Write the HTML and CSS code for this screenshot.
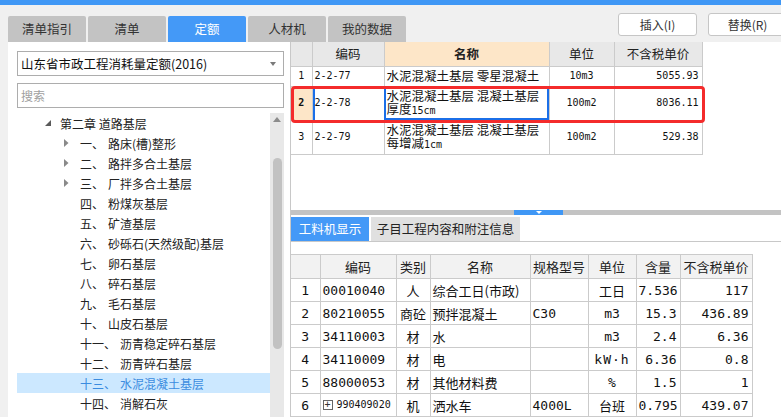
FILE: index.html
```html
<!DOCTYPE html>
<html lang="zh-CN">
<head>
<meta charset="utf-8">
<title>定额</title>
<link rel="stylesheet" href="styles.css">
</head>
<body>
<div class="topbar"></div>
<div class="toolbar">
  <div class="tabs">
    <div class="tab">清单指引</div>
    <div class="tab">清单</div>
    <div class="tab active">定额</div>
    <div class="tab">人材机</div>
    <div class="tab">我的数据</div>
  </div>
  <div class="actions">
    <button class="btn">插入(I)</button>
    <button class="btn">替换(R)</button>
  </div>
</div>
<div class="main">
  <aside class="left">
    <div class="select">山东省市政工程消耗量定额(2016)<span class="caret"></span></div>
    <div class="search">搜索</div>
    <div class="treewrap">
      <ul class="tree">
        <li class="ch"><span class="arrow"><svg width="6" height="6" viewBox="0 0 6 6"><polygon points="6,0 6,6 0,6" fill="#5a5a5a"/></svg></span>第二章 道路基层</li>
        <li class="sub"><span class="arrow"><svg width="5" height="8" viewBox="0 0 5 8"><polygon points="0,0 4.5,4 0,8" fill="#8a8a8a"/></svg></span><span class="no">一、</span>路床(槽)整形</li>
        <li class="sub"><span class="arrow"><svg width="5" height="8" viewBox="0 0 5 8"><polygon points="0,0 4.5,4 0,8" fill="#8a8a8a"/></svg></span><span class="no">二、</span>路拌多合土基层</li>
        <li class="sub"><span class="arrow"><svg width="5" height="8" viewBox="0 0 5 8"><polygon points="0,0 4.5,4 0,8" fill="#8a8a8a"/></svg></span><span class="no">三、</span>厂拌多合土基层</li>
        <li class="sub"><span class="arrow"></span><span class="no">四、</span>粉煤灰基层</li>
        <li class="sub"><span class="arrow"></span><span class="no">五、</span>矿渣基层</li>
        <li class="sub"><span class="arrow"></span><span class="no">六、</span>砂砾石(天然级配)基层</li>
        <li class="sub"><span class="arrow"></span><span class="no">七、</span>卵石基层</li>
        <li class="sub"><span class="arrow"></span><span class="no">八、</span>碎石基层</li>
        <li class="sub"><span class="arrow"></span><span class="no">九、</span>毛石基层</li>
        <li class="sub"><span class="arrow"></span><span class="no">十、</span>山皮石基层</li>
        <li class="sub"><span class="arrow"></span><span class="no no2">十一、</span>沥青稳定碎石基层</li>
        <li class="sub"><span class="arrow"></span><span class="no no2">十二、</span>沥青碎石基层</li>
        <li class="sub selected"><span class="arrow"></span><span class="no no2">十三、</span>水泥混凝土基层</li>
        <li class="sub"><span class="arrow"></span><span class="no no2">十四、</span>消解石灰</li>
        <li class="sub"><span class="arrow"></span><span class="no no2">十五、</span>其他</li>
      </ul>
      <div class="scroll"><span class="up"></span><span class="thumb"></span></div>
    </div>
  </aside>
  <section class="right">
    <div class="upper">
      <table class="grid top">
        <colgroup><col style="width:21px"><col style="width:72px"><col style="width:165px"><col style="width:65px"><col style="width:88px"></colgroup>
        <thead>
          <tr><th class="rn"></th><th>编码</th><th class="namehd">名称</th><th>单位</th><th>不含税单价</th></tr>
        </thead>
        <tbody>
          <tr class="r1"><td class="rn m">1</td><td class="m">2-2-77</td><td class="name">水泥混凝土基层 零星混凝土</td><td class="m c">10m3</td><td class="m r">5055.93</td></tr>
          <tr class="r2 cur"><td class="rn m curno">2</td><td class="m codecur">2-2-78</td><td class="name focus">水泥混凝土基层 混凝土基层<br>厚度<span class="m">15cm</span></td><td class="m c">100m2</td><td class="m r">8036.11</td></tr>
          <tr class="r2"><td class="rn m">3</td><td class="m">2-2-79</td><td class="name">水泥混凝土基层 混凝土基层<br>每增减<span class="m">1cm</span></td><td class="m c">100m2</td><td class="m r">529.38</td></tr>
        </tbody>
      </table>
      <div class="mark"></div>
    </div>
    <div class="splitter"><span class="grip"></span></div>
    <div class="ltabs">
      <div class="ltab active">工料机显示</div>
      <div class="ltab wide">子目工程内容和附注信息</div>
    </div>
    <div class="lower">
      <table class="grid bottom">
        <colgroup><col style="width:29px"><col style="width:76px"><col style="width:34px"><col style="width:100px"><col style="width:58px"><col style="width:48px"><col style="width:44px"><col style="width:72px"></colgroup>
        <thead>
          <tr><th class="rn"></th><th>编码</th><th>类别</th><th>名称</th><th>规格型号</th><th>单位</th><th>含量</th><th>不含税单价</th></tr>
        </thead>
        <tbody>
          <tr><td class="rn m">1</td><td class="m">00010040</td><td class="c">人</td><td>综合工日(市政)</td><td></td><td class="c">工日</td><td class="m r">7.536</td><td class="m r">117</td></tr>
          <tr><td class="rn m">2</td><td class="m">80210055</td><td class="c">商砼</td><td>预拌混凝土</td><td class="m">C30</td><td class="m c">m3</td><td class="m r">15.3</td><td class="m r">436.89</td></tr>
          <tr><td class="rn m">3</td><td class="m">34110003</td><td class="c">材</td><td>水</td><td></td><td class="m c">m3</td><td class="m r">2.4</td><td class="m r">6.36</td></tr>
          <tr><td class="rn m">4</td><td class="m">34110009</td><td class="c">材</td><td>电</td><td></td><td class="m c kwh">kW·h</td><td class="m r">6.36</td><td class="m r">0.8</td></tr>
          <tr><td class="rn m">5</td><td class="m">88000053</td><td class="c">材</td><td>其他材料费</td><td></td><td class="m c">%</td><td class="m r">1.5</td><td class="m r">1</td></tr>
          <tr><td class="rn m">6</td><td class="code6"><div class="codebox"><span class="plus">+</span><span class="m">990409020</span></div></td><td class="c">机</td><td>洒水车</td><td class="m">4000L</td><td class="c">台班</td><td class="m r">0.795</td><td class="m r">439.07</td></tr>
        </tbody>
      </table>
    </div>
  </section>
</div>
</body>
</html>
```
FILE: styles.css
```css
* { box-sizing: border-box; margin: 0; padding: 0; }
html, body { width: 781px; height: 417px; overflow: hidden; }
body {
  background: #f0f0f0;
  font-family: "Noto Sans CJK SC", "Noto Sans", sans-serif;
  font-size: 12px;
  color: #222;
}
.topbar { height: 5px; background: #3f97f5; }
.toolbar { height: 37px; display: flex; align-items: flex-start; }
.tabs { display: flex; gap: 2px; padding-left: 8px; margin-top: 11px; }
.tab {
  width: 78px; height: 26px; line-height: 26px; text-align: center;
  background: #c3c3c3; border-radius: 2px 2px 0 0;
  font-size: 12.5px; color: #333;
}
.tab.active { background: #4499f7; color: #fff; }
.actions { margin-left: auto; margin-right: -6px; margin-top: 8px; display: flex; gap: 11px; }
.btn {
  width: 79px; height: 23px; border: 1px solid #c6c6c6; border-radius: 3px;
  background: #fff; color: #333; text-align: center;
  font-family: "Noto Sans CJK SC", sans-serif; font-size: 12px; line-height: 20px;
}

.main { display: flex; height: 375px; }
.left {
  width: 282px; margin-left: 8px; background: #fff;
  padding: 9px 6px 0 9px; display: flex; flex-direction: column;
}
.select {
  height: 25px; border: 1px solid #adadad; padding-left: 3px;
  display: flex; align-items: center; position: relative; color: #111; font-size: 12.5px;
}
.caret {
  position: absolute; right: 7px; top: 10px;
  border-top: 4px solid #7a7a7a; border-left: 3px solid transparent; border-right: 3px solid transparent;
}
.search {
  margin-top: 7px; height: 25px; border: 1px solid #adadad;
  padding-left: 3px; line-height: 23px; color: #a0a0a0;
}
.treewrap { margin-top: 5px; flex: 1; display: flex; overflow: hidden; }
.tree { flex: 1; list-style: none; }
.tree li {
  height: 20px; display: flex; align-items: center; white-space: nowrap; color: #222;
}
.tree li.ch { padding-left: 28px; }
.tree li.ch .arrow { width: 15px; padding-bottom: 1px; }
.tree li.sub { padding-left: 47px; }
.tree li.sub .arrow { width: 16px; padding-bottom: 1px; }
.arrow { display: flex; align-items: center; }
.no { display: inline-block; width: 28px; flex: none; }
.no.no2 { width: 40px; }
.tree li.selected { background: #cce8ff; color: #3b8ce0; }
.scroll { width: 14px; background: #e8e8e8; position: relative; }
.up {
  position: absolute; top: 4px; left: 3px;
  border-bottom: 5px solid #8c8c8c; border-left: 4px solid transparent; border-right: 4px solid transparent;
}
.thumb {
  position: absolute; top: 45px; left: 3px; width: 9px; height: 191px;
  background: #c2c2c2; border-radius: 5px;
}

.right {
  flex: 1; background: #fff; border-left: 1px solid #c8c8c8;
  display: flex; flex-direction: column;
}
.upper { height: 171px; position: relative; }
.grid { border-collapse: collapse; table-layout: fixed; }
.grid th, .grid td {
  border: 1px solid #cbcbcb; overflow: hidden; white-space: nowrap;
  padding: 0 2px; vertical-align: middle;
}
.grid tr > :first-child { border-left: none; }
.grid th { font-weight: normal; font-size: 13px; color: #222; }
.top { width: 411px; }
.top th { height: 24px; background: #e8e8e8; border-top: none; font-size: 12.5px; }
.top th.namehd { background: #fde6c8; font-weight: bold; }
.top td { font-size: 12.5px; color: #111; line-height: 13.5px; }
.top tr.r1 td { height: 20px; }
.top tr.r2 td { height: 34px; }
.top td.name { white-space: normal; padding-left: 2px; }
.top tr.r1 td.name { white-space: nowrap; }
.top td.curno { background: #fde6c8; font-weight: bold; }
.top td.codecur { box-shadow: inset 2px 0 0 #1b6fe8; }
.top td.focus { outline: 2px solid #1b6fe8; outline-offset: -2px; }
.mark {
  position: absolute; left: 0; top: 44px; width: 414px; height: 37px;
  border: 3px solid #f42b2b; border-radius: 4px;
}
.m { font-family: "DejaVu Sans Mono", "Liberation Mono", monospace; font-size: 10px; }
td.m { font-size: 10px; }
.c { text-align: center; }
.r { text-align: right; }
td.r { padding-right: 3px; }
.rn { text-align: center; }

.splitter { height: 5px; background: #c3c3c3; position: relative; }
.grip {
  position: absolute; left: 223px; top: 0; width: 49px; height: 5px; background: #3f97f5;
  display: flex; justify-content: center; align-items: center;
}
.grip::after {
  content: ""; border-top: 3px solid #fff; border-left: 3px solid transparent; border-right: 3px solid transparent;
}
.ltabs {
  height: 27px; display: flex; gap: 2px; padding-top: 2px;
  border-bottom: 1px solid #c8c8c8;
}
.ltab {
  width: 78px; height: 24px; line-height: 24px; text-align: center;
  background: #e0e0e0; font-size: 12.5px; color: #222;
}
.ltab.wide { width: 149px; }
.ltab.active { background: #4499f7; color: #fff; }

.lower { flex: 1; padding-top: 12px; }
.bottom { width: 461px; }
.bottom th { height: 24px; background: #f2f2f2; }
.bottom td { height: 23px; font-size: 13px; color: #111; }
.bottom td.kwh { letter-spacing: 1px; }
.bottom td.code6 { padding: 0 0 0 2px; }
.codebox { display: flex; align-items: center; gap: 4px; }
.codebox .m { font-size: 10px; line-height: 12px; }
.plus {
  flex: none; width: 10px; height: 10px; border: 1px solid #666;
  display: flex; align-items: center; justify-content: center;
  font-family: "DejaVu Sans Mono", monospace; font-size: 10px; line-height: 1; color: #333;
}
```
